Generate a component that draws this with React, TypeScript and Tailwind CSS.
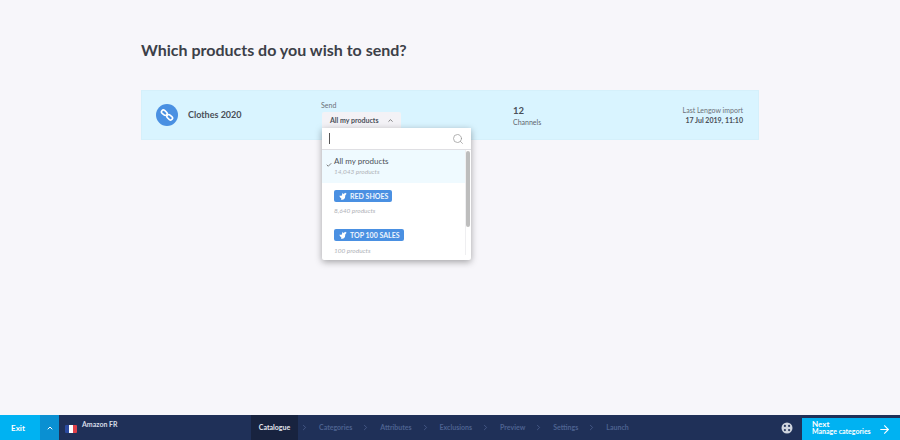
import React from 'react';
import { ChevronUp, ChevronRight, ArrowRight, Search, Check } from 'lucide-react';

const Tag: React.FC<{ label: string }> = ({ label }) => (
  <div className="flex h-[12px] w-fit items-center rounded-[2px] bg-[#4a90e2] pl-[5px] pr-[4px] text-[7px] font-bold leading-none text-[#eef5fd]">
    <svg width="8" height="8" viewBox="0 0 12 12" className="mr-[3px]" fill="white">
      <path d="M0.5 5.5 L4 5.5 L5.5 1 L7 3.5 L9 1 L11.5 2.5 L9.5 5 L9 8.5 Q8 11.5 5 11.5 L3 11.5 L3.5 9.5 Q1.5 8.5 0.5 5.5 Z" />
    </svg>
    {label}
  </div>
);

const steps = ['Categories', 'Attributes', 'Exclusions', 'Preview', 'Settings', 'Launch'];

export default function App() {
  return (
    <div className="flex h-[440px] w-[900px] flex-col overflow-hidden bg-[#f7f6fa] font-['Lato',sans-serif] text-[#3a3f4a]">
      <main className="flex-1 px-[141px] pt-[40px]">
        <h1 className="text-[16px] font-bold leading-[20px] text-[#3c4048]">Which products do you wish to send?</h1>

        <div className="mt-[30px] flex h-[50px] w-[618px] items-center border border-[#d5f0fb] bg-[#d9f4ff] pl-[14px] pr-[15px]">
          <div className="flex h-[22px] w-[22px] items-center justify-center rounded-full bg-[#4a90e2]">
            <svg width="14" height="14" viewBox="0 0 14 14" fill="none" stroke="white" strokeWidth="1.6">
              <rect x="1.2" y="2.8" width="6.2" height="3.8" rx="1.9" transform="rotate(40 4.3 4.7)" />
              <rect x="6.6" y="7.4" width="6.2" height="3.8" rx="1.9" transform="rotate(40 9.7 9.3)" />
            </svg>
          </div>
          <div className="ml-[10px] w-[134px] text-[9px] font-bold text-[#4a4f58]">Clothes 2020</div>

          <div className="relative h-[30px] w-[191px]">
            <div className="-ml-px text-[7px] leading-[10px] text-[#6c7078]">Send</div>
            <div className="mt-[2px] flex h-[16px] w-[79px] items-center rounded-t-[2px] bg-[#f3f2f6] pl-[8px] text-[7px] font-bold text-[#4a4f58]">
              All my products
              <ChevronUp size={7} strokeWidth={2.5} className="ml-[8px] text-[#555]" />
            </div>

            <div className="absolute left-0 top-[28px] z-10 h-[132px] w-[149px] overflow-hidden rounded-b-[2px] bg-white shadow-[0_2px_7px_rgba(0,0,0,0.35)]">
              <div className="flex h-[22px] items-center justify-between border-b border-[#dfdfe3] pl-[7px] pr-[7px]">
                <div className="h-[11px] w-px bg-[#555]" />
                <Search size={12} strokeWidth={1.5} className="text-[#9a9a9a]" />
              </div>
              <div className="flex">
                <div className="w-[143px]">
                  <div className="flex h-[33px] bg-[#effaff] pt-[6px]">
                    <Check size={6} strokeWidth={3} className="ml-[4px] mr-[2px] mt-[6px] text-[#555]" />
                    <div>
                      <div className="text-[8px] leading-[11px] text-[#4a4f58]">All my products</div>
                      <div className="text-[6.5px] italic leading-[9px] text-[#b0b2b8]">14,043 products</div>
                    </div>
                  </div>
                  <div className="pl-[12px] pt-[7px]">
                    <Tag label="RED SHOES" />
                    <div className="mt-[4px] text-[6.5px] italic leading-[9px] text-[#b0b2b8]">8,640 products</div>
                  </div>
                  <div className="pl-[12px] pt-[14px]">
                    <Tag label="TOP 100 SALES" />
                    <div className="mt-[5px] text-[6.5px] italic leading-[9px] text-[#b0b2b8]">100 products</div>
                  </div>
                </div>
                <div className="w-[6px] border-l border-[#efeff1] pt-[1px]">
                  <div className="h-[76px] w-[4px] rounded-full bg-[#bdbdbd]" />
                </div>
              </div>
            </div>
          </div>

          <div className="flex-1 pt-[1px]">
            <div className="text-[9.5px] font-bold leading-[12px] text-[#4a4f58]">12</div>
            <div className="mt-[1px] text-[7px] leading-[9px] text-[#5f646c]">Channels</div>
          </div>

          <div className="text-right">
            <div className="text-[7px] leading-[10px] text-[#6c7078]">Last Lengow import</div>
            <div className="text-[7px] font-bold leading-[10px] text-[#4a4f58]">17 Jul 2019, 11:10</div>
          </div>
        </div>
      </main>

      <footer className="flex h-[25px] items-stretch bg-[#1f3058] text-[7.5px] text-white">
        <div className="flex w-[40px] items-center justify-center bg-[#00b2f2] pr-[4px] text-[8px] font-bold">Exit</div>
        <div className="flex w-[19px] items-center justify-center bg-[#0a90d2]">
          <ChevronUp size={8} strokeWidth={3} />
        </div>
        <div className="flex w-[192px] items-center pl-[6px]">
          <div className="mt-[3px] flex h-[8px] w-[12px] overflow-hidden rounded-[1px]">
            <div className="flex-1 bg-[#2b4aa0]" />
            <div className="flex-1 bg-white" />
            <div className="flex-1 bg-[#e0404a]" />
          </div>
          <div className="mb-[7px] ml-[5px] text-[7px] font-bold text-[#d8dde8]">Amazon FR</div>
        </div>
        <div className="flex w-[47px] items-center justify-center bg-[#18233f] text-[7px] font-bold text-[#e4e7ee]">Catalogue</div>
        <div className="flex items-center pl-[2px] text-[7px] font-bold text-[#4d6290]">
          {steps.map((step) => (
            <React.Fragment key={step}>
              <ChevronRight size={9} strokeWidth={2} className="mr-[10px]" />
              <span className="mr-[9px]">{step}</span>
            </React.Fragment>
          ))}
        </div>
        <div className="ml-auto flex items-center">
          <svg width="12" height="12" viewBox="0 0 12 12" className="mr-[9px]">
            <circle cx="6" cy="6" r="5.5" fill="#cfd4de" />
            <circle cx="3.9" cy="3.9" r="1.1" fill="#2a3a60" />
            <circle cx="8.1" cy="3.9" r="1.1" fill="#2a3a60" />
            <circle cx="3.9" cy="8.1" r="1.1" fill="#2a3a60" />
            <circle cx="8.1" cy="8.1" r="1.1" fill="#2a3a60" />
          </svg>
          <div className="flex h-[22px] w-[98px] items-center self-end bg-[#00b2f2] pl-[10px]">
            <div className="-mt-[2px] leading-[7px]">
              <div className="text-[8px] font-bold">Next</div>
              <div className="text-[7px] font-bold">Manage categories</div>
            </div>
            <ArrowRight size={13} strokeWidth={2} className="ml-[7px]" />
          </div>
        </div>
      </footer>
    </div>
  );
}
